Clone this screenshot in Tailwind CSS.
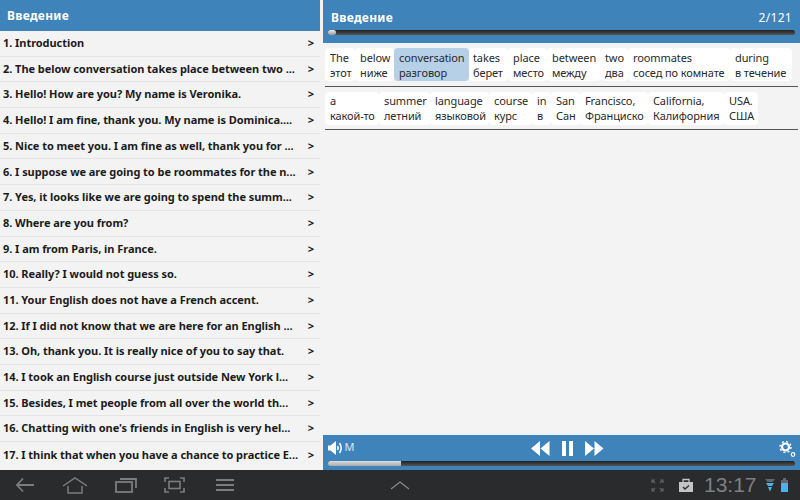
<!DOCTYPE html>
<html lang="en">
<head>
<meta charset="UTF-8" />
<title>Введение</title>
<script src="https://cdn.jsdelivr.net/npm/@tailwindcss/browser@4"></script>
</head>
<body class="w-[800px] h-[500px] overflow-hidden bg-[#f3f3f3] flex flex-col font-['Noto_Sans','Open_Sans',sans-serif]">

<div class="flex h-[470px]">
  <!-- chapter list -->
  <div class="w-[320px] flex flex-col overflow-hidden">
    <div class="h-[31px] shrink-0 bg-[#3f83bb] text-white font-bold text-[12px] pl-[7px] leading-[31px] tracking-[0.3px]">Введение</div>
    <div class="flex flex-col text-[11px] font-bold text-[#1c1c1c] tracking-[-0.05px]">
      <div class="h-[25.7px] flex items-center justify-between pl-[3px] pr-[6px] border-b border-[#e4e4e4]"><span>1. Introduction</span><span>&gt;</span></div>
      <div class="h-[25.7px] flex items-center justify-between pl-[3px] pr-[6px] border-b border-[#e4e4e4]"><span>2. The below conversation takes place between two ...</span><span>&gt;</span></div>
      <div class="h-[25.7px] flex items-center justify-between pl-[3px] pr-[6px] border-b border-[#e4e4e4]"><span>3. Hello! How are you? My name is Veronika.</span><span>&gt;</span></div>
      <div class="h-[25.7px] flex items-center justify-between pl-[3px] pr-[6px] border-b border-[#e4e4e4]"><span>4. Hello! I am fine, thank you. My name is Dominica....</span><span>&gt;</span></div>
      <div class="h-[25.7px] flex items-center justify-between pl-[3px] pr-[6px] border-b border-[#e4e4e4]"><span>5. Nice to meet you. I am fine as well, thank you for ...</span><span>&gt;</span></div>
      <div class="h-[25.7px] flex items-center justify-between pl-[3px] pr-[6px] border-b border-[#e4e4e4]"><span>6. I suppose we are going to be roommates for the n...</span><span>&gt;</span></div>
      <div class="h-[25.7px] flex items-center justify-between pl-[3px] pr-[6px] border-b border-[#e4e4e4]"><span>7. Yes, it looks like we are going to spend the summ...</span><span>&gt;</span></div>
      <div class="h-[25.7px] flex items-center justify-between pl-[3px] pr-[6px] border-b border-[#e4e4e4]"><span>8. Where are you from?</span><span>&gt;</span></div>
      <div class="h-[25.7px] flex items-center justify-between pl-[3px] pr-[6px] border-b border-[#e4e4e4]"><span>9. I am from Paris, in France.</span><span>&gt;</span></div>
      <div class="h-[25.7px] flex items-center justify-between pl-[3px] pr-[6px] border-b border-[#e4e4e4]"><span>10. Really? I would not guess so.</span><span>&gt;</span></div>
      <div class="h-[25.7px] flex items-center justify-between pl-[3px] pr-[6px] border-b border-[#e4e4e4]"><span>11. Your English does not have a French accent.</span><span>&gt;</span></div>
      <div class="h-[25.7px] flex items-center justify-between pl-[3px] pr-[6px] border-b border-[#e4e4e4]"><span>12. If I did not know that we are here for an English ...</span><span>&gt;</span></div>
      <div class="h-[25.7px] flex items-center justify-between pl-[3px] pr-[6px] border-b border-[#e4e4e4]"><span>13. Oh, thank you. It is really nice of you to say that.</span><span>&gt;</span></div>
      <div class="h-[25.7px] flex items-center justify-between pl-[3px] pr-[6px] border-b border-[#e4e4e4]"><span>14. I took an English course just outside New York l...</span><span>&gt;</span></div>
      <div class="h-[25.7px] flex items-center justify-between pl-[3px] pr-[6px] border-b border-[#e4e4e4]"><span>15. Besides, I met people from all over the world th...</span><span>&gt;</span></div>
      <div class="h-[25.7px] flex items-center justify-between pl-[3px] pr-[6px] border-b border-[#e4e4e4]"><span>16. Chatting with one's friends in English is very hel...</span><span>&gt;</span></div>
      <div class="h-[25.7px] flex items-center justify-between pl-[3px] pr-[6px]"><span>17. I think that when you have a chance to practice E...</span><span>&gt;</span></div>
    </div>
  </div>

  <!-- reader -->
  <div class="ml-[3px] flex-1 flex flex-col min-w-0">
    <div class="h-[43px] shrink-0 bg-[#3f83bb] px-[5px] pt-[9px]">
      <div class="flex justify-between items-center h-[17px] text-white font-bold text-[12px] px-[3px] tracking-[0.3px]">
        <span>Введение</span><span class="font-normal">2/121</span>
      </div>
      <div class="mt-[4px] h-[5px] rounded-full bg-gradient-to-b from-[#222] to-[#555]">
        <div class="h-[5px] w-[8px] rounded-full bg-gradient-to-b from-[#eee] to-[#999]"></div>
      </div>
    </div>

    <div class="flex-1 bg-[#f3f3f3] text-[11px] text-[#2a2a2a] leading-[15px] tracking-[-0.1px] whitespace-nowrap">
      <div class="flex mx-[2px] pt-[5px] pb-[5px] border-b border-[#555]">
        <div class="bg-white rounded-[4px] pl-[5px] py-[2px] w-[30px] h-[33px]"><div>The</div><div>этот</div></div>
        <div class="bg-white rounded-[4px] pl-[5px] py-[2px] w-[39px] h-[33px]"><div>below</div><div>ниже</div></div>
        <div class="bg-[#b6d0e8] rounded-[4px] pl-[5px] py-[2px] w-[75px] h-[33px]"><div>conversation</div><div>разговор</div></div>
        <div class="bg-white rounded-[4px] pl-[4px] py-[2px] w-[39px] h-[33px]"><div>takes</div><div>берет</div></div>
        <div class="bg-white rounded-[4px] pl-[5px] py-[2px] w-[39px] h-[33px]"><div>place</div><div>место</div></div>
        <div class="bg-white rounded-[4px] pl-[5px] py-[2px] w-[54px] h-[33px]"><div>between</div><div>между</div></div>
        <div class="bg-white rounded-[4px] pl-[4px] py-[2px] w-[27px] h-[33px]"><div>two</div><div>два</div></div>
        <div class="bg-white rounded-[4px] pl-[5px] py-[2px] w-[102px] h-[33px]"><div>roommates</div><div>сосед по комнате</div></div>
        <div class="bg-white rounded-[4px] pl-[5px] py-[2px] w-[62px] h-[33px]"><div>during</div><div>в течение</div></div>
      </div>
      <div class="flex mx-[2px] pt-[5px] pb-[4px] border-b border-[#555]">
        <div class="bg-white rounded-[4px] pl-[5px] py-[1px] w-[54px] h-[33px]"><div>a</div><div>какой-то</div></div>
        <div class="bg-white rounded-[4px] pl-[5px] py-[1px] w-[51px] h-[33px]"><div>summer</div><div>летний</div></div>
        <div class="bg-white rounded-[4px] pl-[5px] py-[1px] w-[59px] h-[33px]"><div>language</div><div>языковой</div></div>
        <div class="bg-white rounded-[4px] pl-[5px] py-[1px] w-[43px] h-[33px]"><div>course</div><div>курс</div></div>
        <div class="bg-white rounded-[4px] pl-[5px] py-[1px] w-[19px] h-[33px]"><div>in</div><div>в</div></div>
        <div class="bg-white rounded-[4px] pl-[5px] py-[1px] w-[29px] h-[33px]"><div>San</div><div>Сан</div></div>
        <div class="bg-white rounded-[4px] pl-[5px] py-[1px] w-[68px] h-[33px]"><div>Francisco,</div><div>Франциско</div></div>
        <div class="bg-white rounded-[4px] pl-[5px] py-[1px] w-[76px] h-[33px]"><div>California,</div><div>Калифорния</div></div>
        <div class="bg-white rounded-[4px] pl-[5px] py-[1px] w-[34px] h-[33px]"><div>USA.</div><div>США</div></div>
      </div>
    </div>

    <!-- player -->
    <div class="h-[35px] shrink-0 bg-[#3f83bb] px-[5px] relative">
      <div class="h-[25px] flex items-center justify-between">
        <div class="flex items-center text-[11px]">
          <svg width="16" height="16" viewBox="0 0 16 16" fill="none"><path d="M0 5.500h2.500L8 1v14l-5.500-4.500H0z" fill="#fff"/><path d="M9.500 6c.8 1.200.8 2.800 0 4M11.500 3c2 3 2 7 0 10" stroke="#fff" stroke-width="1.500"/></svg>
          <span class="text-[#dce9f4] ml-[0.5px]">M</span>
        </div>
        <div class="absolute left-[208px] top-[6px] flex items-center">
          <svg width="19" height="15" viewBox="0 0 19 15" fill="#fff"><path d="M9 0v15L0 7.500zM18.500 0v15l-9-7.500z"/></svg>
          <svg class="ml-[12px]" width="11" height="15" viewBox="0 0 11 15" fill="#fff"><path d="M0 0h4v15H0zM7 0h4v15H7z"/></svg>
          <svg class="ml-[12px]" width="19" height="15" viewBox="0 0 19 15" fill="#fff"><path d="M0 0l9 7.500L0 15zM9.500 0l9 7.500-9 7.500z"/></svg>
        </div>
        <svg class="mr-[-1px] mt-[3px]" width="17" height="18" viewBox="0 0 17 18" fill="none"><circle cx="6.500" cy="7" r="3.500" stroke="#fff" stroke-width="2.200"/><circle cx="6.500" cy="7" r="5.500" stroke="#fff" stroke-width="1.500" stroke-dasharray="2 2.300"/><circle cx="14" cy="14.500" r="1.800" stroke="#fff" stroke-width="1.200"/></svg>
      </div>
      <div class="h-[5px] mt-[1px] rounded-full bg-gradient-to-b from-[#222] to-[#555] overflow-hidden">
        <div class="h-[5px] w-[73px] bg-gradient-to-b from-[#ddd] to-[#aaa]"></div>
      </div>
    </div>
  </div>
</div>

<!-- android system bar -->
<div class="h-[30px] bg-[#2a2b2d] flex items-center relative">
  <svg class="absolute left-[15px] top-[7px]" width="20" height="16" viewBox="0 0 20 16" fill="none" stroke="#7d7d7d" stroke-width="1.800"><path d="M19 8H2M8 1.500L2 8l6 6.500"/></svg>
  <svg class="absolute left-[62px] top-[7px]" width="26" height="17" viewBox="0 0 26 17" fill="none" stroke="#7d7d7d" stroke-width="1.500"><path d="M1 9L13 1l12 8M6 9v7h14V9"/></svg>
  <svg class="absolute left-[115px] top-[7px]" width="22" height="16" viewBox="0 0 22 16" fill="none" stroke="#7d7d7d" stroke-width="1.800"><rect x="1" y="5" width="16" height="10"/><path d="M5 2h16v9"/></svg>
  <svg class="absolute left-[164px] top-[7px]" width="21" height="16" viewBox="0 0 21 16" fill="none" stroke="#7d7d7d" stroke-width="1.600"><path d="M1 5V1h4M16 1h4v4M1 11v4h4M16 15h4v-4"/><rect x="5" y="4.500" width="11" height="7"/></svg>
  <svg class="absolute left-[216px] top-[9px]" width="18" height="12" viewBox="0 0 18 12" fill="#7d7d7d"><path d="M0 0h18v2H0zM0 5h18v2H0zM0 10h18v2H0z"/></svg>
  <svg class="absolute left-[390px] top-[11px]" width="20" height="9" viewBox="0 0 20 9" fill="none" stroke="#8a8a8a" stroke-width="1.200"><path d="M1 8l9-7 9 7"/></svg>
  <svg class="absolute left-[651px] top-[9px]" width="13" height="13" viewBox="0 0 13 13" fill="none" stroke="#5f6060" stroke-width="1.200"><path d="M1 4V1h3M9 1h3v3M1 9v3h3M9 12h3V9M1 1l3 3M12 1L9 4M1 12l3-3M12 12L9 9"/></svg>
  <svg class="absolute left-[679px] top-[8px]" width="14" height="14" viewBox="0 0 14 14"><path d="M0 4h14v10H0z" fill="#c4c4c4"/><path d="M4 4V1.500h6V4" fill="none" stroke="#c4c4c4" stroke-width="1.300"/><path d="M4 9l2 2 4-3.500" fill="none" stroke="#2a2b2d" stroke-width="1.300"/></svg>
  <span class="absolute left-[704px] top-[0px] leading-[30px] text-[21px] text-[#7f7f7f] font-['Liberation_Sans',sans-serif]">13:17</span>
  <svg class="absolute left-[765px] top-[9px]" width="10" height="13" viewBox="0 0 10 13"><path d="M0 0h10L7.500 3h-5z" fill="#666"/><path d="M1 4h8L7 7H3z" fill="#4cb3e6"/><path d="M3 8h4L5 12.500z" fill="#4cb3e6"/></svg>
  <svg class="absolute left-[781px] top-[8px]" width="7" height="14" viewBox="0 0 7 14"><path d="M2 0h3v2H2zM0 2h7v3H0z" fill="#666"/><path d="M0 5h7v9H0z" fill="#4cb3e6"/></svg>
</div>

</body>
</html>
